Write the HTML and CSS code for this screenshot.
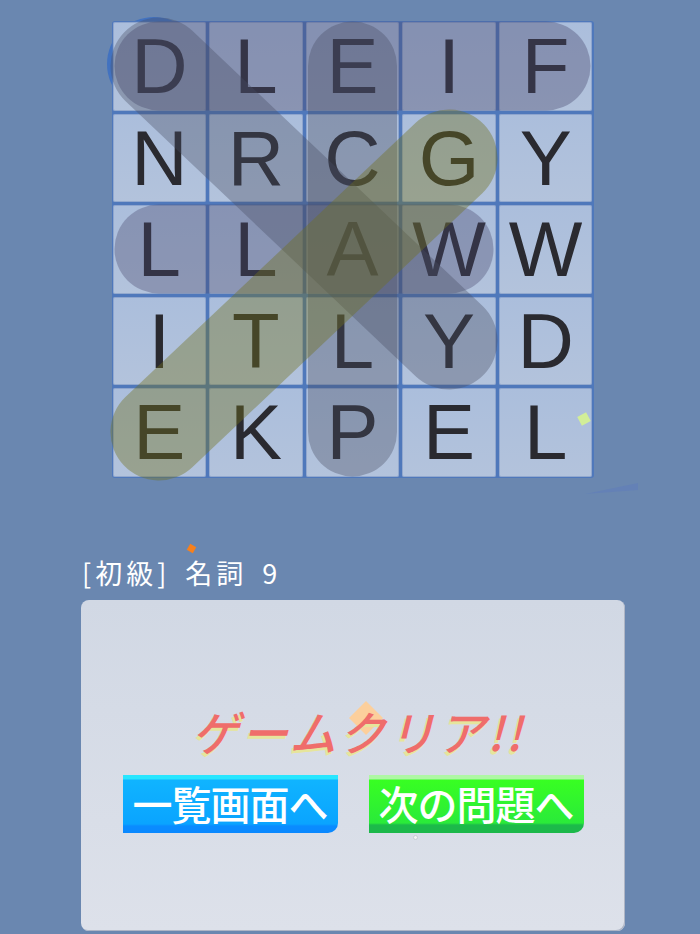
FILE: index.html
```html
<!DOCTYPE html>
<html lang="ja">
<head>
<meta charset="utf-8">
<title>単語探し</title>
<link rel="stylesheet" href="styles.css">
</head>
<body>
<div class="stage">
  <svg class="under" width="700" height="520" viewBox="0 0 700 520" aria-hidden="true">
    <circle cx="154" cy="64" r="47" fill="#4272c0"/>
    <polygon points="585,494 638,483 638,490" fill="#6481b6"/>
  </svg>
  <div class="board">
    <div class="cell">D</div><div class="cell">L</div><div class="cell">E</div><div class="cell">I</div><div class="cell">F</div>
    <div class="cell">N</div><div class="cell">R</div><div class="cell">C</div><div class="cell">G</div><div class="cell">Y</div>
    <div class="cell">L</div><div class="cell">L</div><div class="cell">A</div><div class="cell">W</div><div class="cell">W</div>
    <div class="cell">I</div><div class="cell">T</div><div class="cell">L</div><div class="cell">Y</div><div class="cell">D</div>
    <div class="cell">E</div><div class="cell">K</div><div class="cell">P</div><div class="cell">E</div><div class="cell">L</div>
  </div>
  <svg class="marks" width="700" height="520" viewBox="0 0 700 520" aria-hidden="true">
    <g stroke-linecap="round" fill="none">
      <line x1="159" y1="66" x2="546" y2="66" stroke="rgba(72,72,110,0.38)" stroke-width="89"/>
      <line x1="352.5" y1="66" x2="352.5" y2="432" stroke="rgba(72,78,100,0.36)" stroke-width="89"/>
      <line x1="159" y1="249" x2="449" y2="249" stroke="rgba(72,72,110,0.36)" stroke-width="89"/>
      <line x1="159" y1="66" x2="449" y2="341" stroke="rgba(72,78,100,0.36)" stroke-width="97"/>
      <line x1="159" y1="432" x2="449" y2="158" stroke="rgba(112,112,30,0.40)" stroke-width="97"/>
    </g>
    <rect x="579" y="414" width="10" height="10" fill="#d2ee98" transform="rotate(-28 584 419)"/>
  </svg>
  <span class="chip chip-orange"></span>

  <div class="label">[初級] 名詞 9</div>

  <div class="panel">
    <span class="chip chip-peach"></span>
    <div class="title">ゲームクリア!!</div>
    <div class="buttons">
      <div class="btn btn-blue">一覧画面へ</div>
      <div class="btn btn-green">次の問題へ</div>
    </div>
    <span class="dot"></span>
  </div>
</div>
</body>
</html>
```

FILE: styles.css
```css
html, body {
  margin: 0;
  padding: 0;
}
body {
  width: 700px;
  height: 934px;
  overflow: hidden;
  background: #6a87b0;
  font-family: "Noto Sans CJK JP", "Noto Sans", sans-serif;
}
.stage {
  position: relative;
  width: 700px;
  height: 934px;
  padding-top: 21px;
  box-sizing: border-box;
}
.under {
  position: absolute;
  left: 0;
  top: 0;
}
.board {
  position: relative;
  margin-left: 111.5px;
  width: 482px;
  padding: 1px;
  box-sizing: border-box;
  background: #4f78bb;
  border-radius: 3px;
  display: grid;
  grid-template-columns: repeat(5, 93.6px);
  grid-template-rows: repeat(5, 88.5px);
  gap: 3px;
}
.cell {
  background: linear-gradient(#abbedc, #b3c3dc);
  border-radius: 2px;
  box-shadow: inset 0 0 0 1px rgba(90, 120, 180, 0.35);
  display: flex;
  align-items: center;
  justify-content: center;
  font-family: "Liberation Sans", Arial, sans-serif;
  font-size: 78px;
  line-height: 86px;
  color: #2a2a30;
}
.marks {
  position: absolute;
  left: 0;
  top: 0;
  pointer-events: none;
}
.chip {
  position: absolute;
  display: block;
}
.chip-orange {
  left: 188px;
  top: 545px;
  width: 7px;
  height: 7px;
  background: #f7801c;
  transform: rotate(30deg);
}
.label {
  margin: 79px 0 0 82px;
  height: 32px;
  font-size: 27px;
  line-height: 32px;
  color: #ffffff;
  letter-spacing: 4px;
  word-spacing: 5px;
}
.panel {
  position: relative;
  margin: 11px 0 0 81px;
  width: 544px;
  height: 331px;
  box-sizing: border-box;
  border-radius: 8px;
  background: linear-gradient(#d1d8e4, #dde1ea);
  box-shadow: inset -1px -1px 0 #aeb5c5;
  padding-top: 105px;
}
.chip-peach {
  left: 273px;
  top: 106px;
  width: 24px;
  height: 24px;
  background: #fccf9c;
  transform: rotate(45deg);
}
.title {
  position: relative;
  text-align: center;
  padding-left: 10px;
  font-size: 47px;
  line-height: 52px;
  font-weight: 500;
  font-style: italic;
  color: #ef6d6b;
  text-shadow: -2px 3px 0 #e6e59c;
  letter-spacing: 2.5px;
}
.buttons {
  margin-top: 18px;
  display: flex;
  justify-content: center;
  gap: 31px;
}
.btn {
  width: 215px;
  height: 58px;
  box-sizing: border-box;
  border-bottom-right-radius: 10px;
  color: #ffffff;
  font-size: 40px;
  line-height: 56px;
  text-align: center;
  white-space: nowrap;
  letter-spacing: -1px;
  font-weight: 500;
}
.btn-blue {
  background: linear-gradient(#28e6ff 0, #28e6ff 4px, #10b4ff 5px, #0aa4ff 49px, #0a8cff 51px, #0a88ff 100%);
}
.btn-green {
  background: linear-gradient(#aef7a4 0, #aef7a4 4px, #38ff22 5px, #2aea3a 48px, #1cba4a 50px, #1cb84a 100%);
}
.dot {
  position: absolute;
  left: 332px;
  top: 235px;
  width: 3px;
  height: 3px;
  border-radius: 50%;
  border: 1px solid #c8ccd4;
  background: #f4f4f4;
}
```
